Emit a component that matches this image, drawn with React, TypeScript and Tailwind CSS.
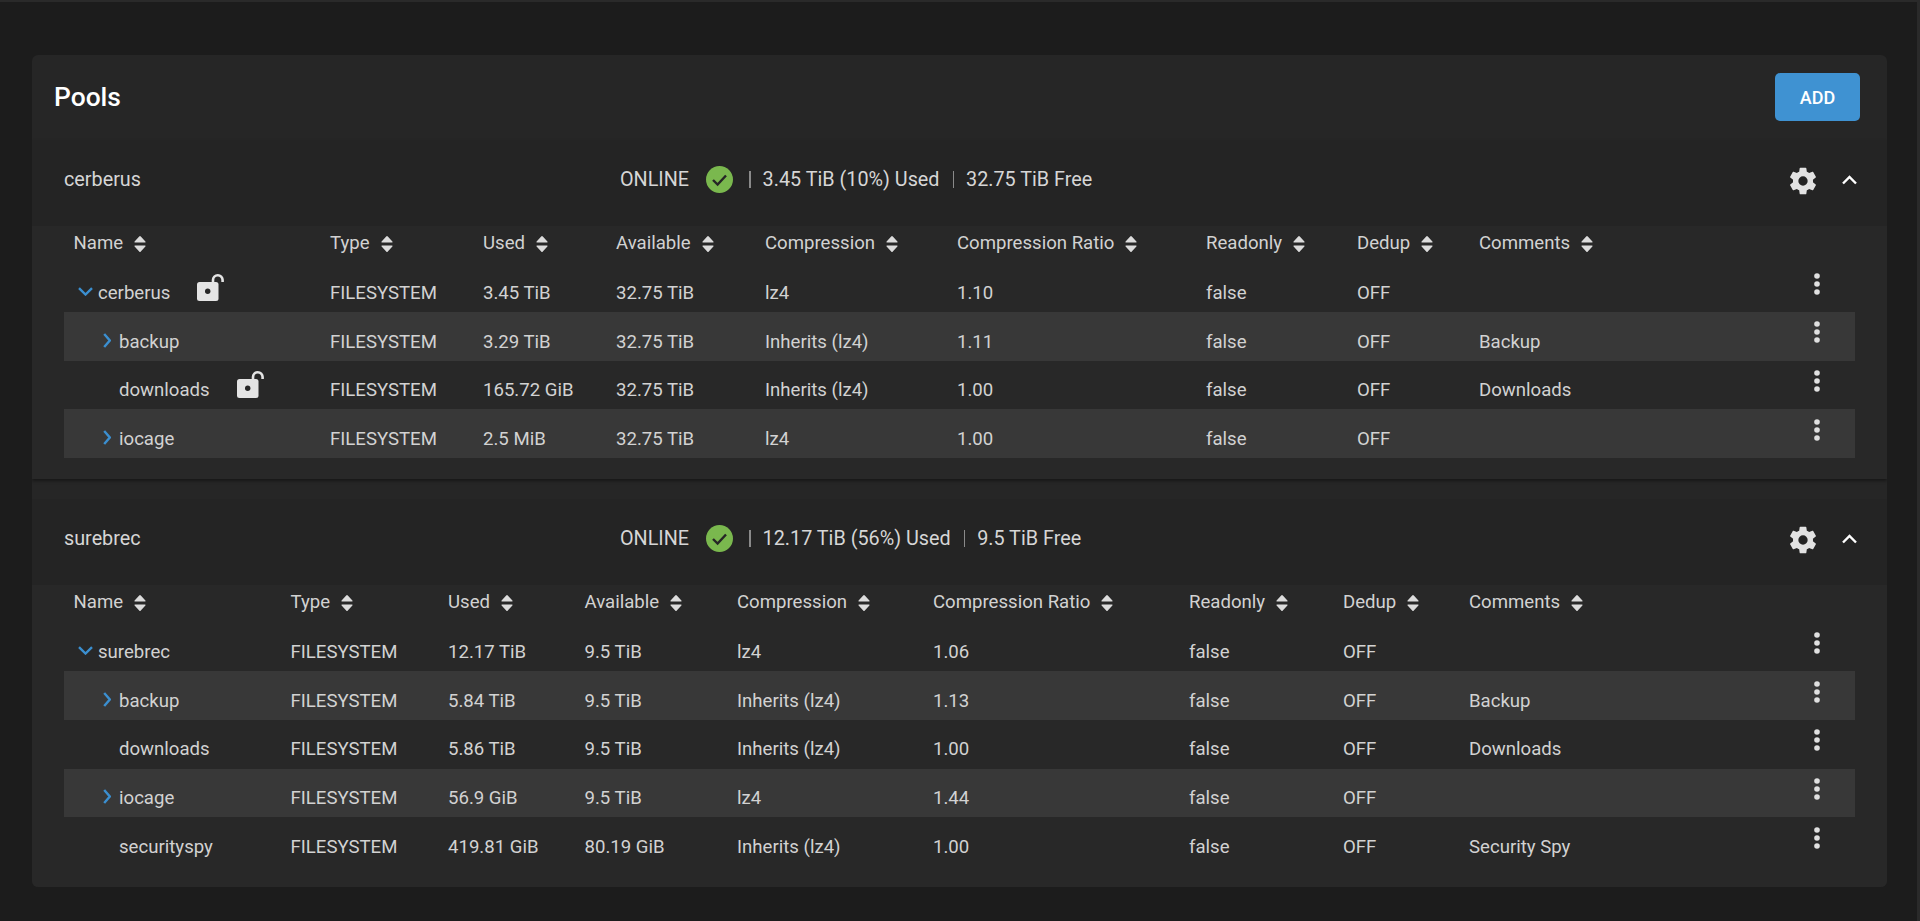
const font = { fontFamily: "Roboto, sans-serif" };

type Row = {
  name: string;
  used: string;
  avail: string;
  compression: string;
  ratio: string;
  comments?: string;
  depth: number;
  chevron?: "down" | "right";
  locked?: boolean;
};

const cerberusRows: Row[] = [
  { name: "cerberus", used: "3.45 TiB", avail: "32.75 TiB", compression: "lz4", ratio: "1.10", depth: 0, chevron: "down", locked: true },
  { name: "backup", used: "3.29 TiB", avail: "32.75 TiB", compression: "Inherits (lz4)", ratio: "1.11", comments: "Backup", depth: 1, chevron: "right" },
  { name: "downloads", used: "165.72 GiB", avail: "32.75 TiB", compression: "Inherits (lz4)", ratio: "1.00", comments: "Downloads", depth: 1, locked: true },
  { name: "iocage", used: "2.5 MiB", avail: "32.75 TiB", compression: "lz4", ratio: "1.00", depth: 1, chevron: "right" },
];

const surebrecRows: Row[] = [
  { name: "surebrec", used: "12.17 TiB", avail: "9.5 TiB", compression: "lz4", ratio: "1.06", depth: 0, chevron: "down" },
  { name: "backup", used: "5.84 TiB", avail: "9.5 TiB", compression: "Inherits (lz4)", ratio: "1.13", comments: "Backup", depth: 1, chevron: "right" },
  { name: "downloads", used: "5.86 TiB", avail: "9.5 TiB", compression: "Inherits (lz4)", ratio: "1.00", comments: "Downloads", depth: 1 },
  { name: "iocage", used: "56.9 GiB", avail: "9.5 TiB", compression: "lz4", ratio: "1.44", depth: 1, chevron: "right" },
  { name: "securityspy", used: "419.81 GiB", avail: "80.19 GiB", compression: "Inherits (lz4)", ratio: "1.00", comments: "Security Spy", depth: 1 },
];

const columns = ["Name", "Type", "Used", "Available", "Compression", "Compression Ratio", "Readonly", "Dedup", "Comments"];

function SortIcon() {
  return (
    <svg width="12" height="16" viewBox="0 0 12 16" fill="#dcdcdc" className="shrink-0">
      <path d="M5.2.6a1 1 0 0 1 1.6 0l4.6 5a.6.6 0 0 1-.4 1H1a.6.6 0 0 1-.4-1z" />
      <path d="M1 9.4h10a.6.6 0 0 1 .4 1l-4.6 5a1 1 0 0 1-1.6 0l-4.6-5a.6.6 0 0 1 .4-1z" />
    </svg>
  );
}

function UnlockIcon() {
  return (
    <svg width="28" height="28" viewBox="0 0 28 28" className="ml-[27px] shrink-0 -translate-y-[7px]">
      <rect x="0" y="9" width="21.5" height="19" rx="2.5" fill="#e4e4e4" />
      <circle cx="10.7" cy="18.3" r="2.7" fill="#282828" />
      <path d="M16 9.5V7a4.8 4.8 0 0 1 9.6 0v2" fill="none" stroke="#e4e4e4" strokeWidth="2.6" />
    </svg>
  );
}

function Chevron({ dir }: { dir: "down" | "right" }) {
  if (dir === "down") {
    return (
      <svg width="15" height="9" viewBox="0 0 15 9" fill="none" stroke="#3b8fd0" strokeWidth="2.4" className="mr-[5px] shrink-0 -translate-y-[2px]">
        <path d="M1 1.2l6.5 6.3L14 1.2" />
      </svg>
    );
  }
  return (
    <svg width="8" height="15" viewBox="0 0 8 15" fill="none" stroke="#3b8fd0" strokeWidth="2.4" className="mr-[8px] shrink-0 -translate-y-[2px]">
      <path d="M1.2 1l5.6 6.5L1.2 14" />
    </svg>
  );
}

function Kebab() {
  return (
    <svg width="8" height="22" viewBox="0 0 8 22" fill="#e0e0e0">
      <circle cx="4" cy="3" r="2.8" />
      <circle cx="4" cy="11" r="2.8" />
      <circle cx="4" cy="19" r="2.8" />
    </svg>
  );
}

function namePadding(r: Row) {
  if (r.depth === 0) return "pl-[4.5px]";
  if (r.chevron) return "pl-[29.5px]";
  return "pl-[45.5px]";
}

function PoolSection({
  name,
  used,
  free,
  rows,
  grid,
  last,
}: {
  name: string;
  used: string;
  free: string;
  rows: Row[];
  grid: string;
  last?: boolean;
}) {
  return (
    <section className={last ? "bg-[#282828]" : "relative bg-[#282828] shadow-[0_2px_3px_rgba(0,0,0,0.4)]"}>
      <div className="flex h-[86px] items-center bg-[#242424] pb-[7px] pl-8 pr-[30px] text-[19.8px] text-[#d6d6d6]">
        <div className="w-[556px]">{name}</div>
        <div className="flex items-center">
          <span>ONLINE</span>
          <svg width="27" height="27" viewBox="0 0 27 27" className="ml-[17px]">
            <circle cx="13.5" cy="13.5" r="13.5" fill="#7ab84e" />
            <path d="M7 14l4.6 4.6L20 9.5" fill="none" stroke="#262626" strokeWidth="2.4" />
          </svg>
          <span className="ml-4 h-[17px] w-[1.5px] bg-[#8a8a8a]" />
          <span className="ml-3">{used}</span>
          <span className="ml-[13px] h-[17px] w-[1.5px] bg-[#8a8a8a]" />
          <span className="ml-3">{free}</span>
        </div>
        <div className="ml-auto flex items-center">
          <svg width="32" height="32" viewBox="0 0 24 24" fill="#e2e2e2" className="mt-[3px]">
            <path d="M12,15.5A3.5,3.5 0 0,1 8.5,12A3.5,3.5 0 0,1 12,8.5A3.5,3.5 0 0,1 15.5,12A3.5,3.5 0 0,1 12,15.5M19.43,12.97C19.47,12.65 19.5,12.33 19.5,12C19.5,11.67 19.47,11.34 19.43,11L21.54,9.37C21.73,9.22 21.78,8.95 21.66,8.73L19.66,5.27C19.54,5.05 19.27,4.96 19.05,5.05L16.56,6.05C16.04,5.66 15.5,5.32 14.87,5.07L14.5,2.42C14.46,2.18 14.25,2 14,2H10C9.75,2 9.54,2.18 9.5,2.42L9.13,5.07C8.5,5.32 7.96,5.66 7.44,6.05L4.95,5.05C4.73,4.96 4.46,5.05 4.34,5.27L2.34,8.73C2.21,8.95 2.27,9.22 2.46,9.37L4.57,11C4.53,11.34 4.5,11.67 4.5,12C4.5,12.33 4.53,12.65 4.57,12.97L2.46,14.63C2.27,14.78 2.21,15.05 2.34,15.27L4.34,18.73C4.46,18.95 4.73,19.03 4.95,18.95L7.44,17.94C7.96,18.34 8.5,18.68 9.13,18.93L9.5,21.58C9.54,21.82 9.75,22 10,22H14C14.25,22 14.46,21.82 14.5,21.58L14.87,18.93C15.5,18.67 16.04,18.34 16.56,17.94L19.05,18.95C19.27,19.03 19.54,18.95 19.66,18.73L21.66,15.27C21.78,15.05 21.73,14.78 21.54,14.63L19.43,12.97Z" />
          </svg>
          <svg width="15" height="10" viewBox="0 0 15 10" fill="none" stroke="#ffffff" strokeWidth="2.4" className="ml-[23px]">
            <path d="M1 8.5l6.5-6.5L14 8.5" />
          </svg>
        </div>
      </div>

      <div className="mx-8 pb-[21px] text-[18.6px] text-[#d2d2d2]">
        <div className={`grid h-[37.5px] items-center pb-[1px] pl-[9.5px] ${grid}`}>
          {columns.map((c) => (
            <div key={c} className="flex items-center gap-[11px]">
              <span>{c}</span>
              <SortIcon />
            </div>
          ))}
        </div>
        {rows.map((r, i) => (
          <div key={r.name} className={`grid h-[48.67px] items-center pl-[9.5px] ${grid} ${i % 2 === 1 ? "bg-[#383838]" : ""}`}>
            <div className={`flex items-center pt-3 ${namePadding(r)}`}>
              {r.chevron && <Chevron dir={r.chevron} />}
              <span>{r.name}</span>
              {r.locked && <UnlockIcon />}
            </div>
            <div className="pt-3">FILESYSTEM</div>
            <div className="pt-3">{r.used}</div>
            <div className="pt-3">{r.avail}</div>
            <div className="pt-3">{r.compression}</div>
            <div className="pt-3">{r.ratio}</div>
            <div className="pt-3">false</div>
            <div className="pt-3">OFF</div>
            <div className="pt-3">{r.comments}</div>
            <div className="flex justify-center pb-[8px]">
              <Kebab />
            </div>
          </div>
        ))}
      </div>
    </section>
  );
}

export default function App() {
  return (
    <div className="h-screen w-full overflow-hidden border-t-2 border-r-[3px] border-[#2a2a2a] bg-[#1c1c1c] pl-8 pr-[30px] pt-[53px]" style={font}>
      <div className="overflow-hidden rounded-[6px] bg-[#262626]">
        <div className="flex h-[85px] items-center justify-between pb-[1px] pl-[22px] pr-[27px]">
          <h1 className="mt-[2px] text-[26.4px] font-medium text-white">Pools</h1>
          <button className="h-12 w-[85px] rounded-[5px] bg-[#3f92d2] text-[18px] font-medium text-white">ADD</button>
        </div>
        <PoolSection
          name="cerberus"
          used="3.45 TiB (10%) Used"
          free="32.75 TiB Free"
          rows={cerberusRows}
          grid="grid-cols-[256.5px_153px_133px_149px_192px_249px_151px_122px_1fr_76px]"
        />
        <div className="h-5" />
        <PoolSection
          name="surebrec"
          used="12.17 TiB (56%) Used"
          free="9.5 TiB Free"
          rows={surebrecRows}
          grid="grid-cols-[217px_157.5px_136.5px_152.5px_196px_256px_154px_126px_1fr_76px]"
          last
        />
      </div>
    </div>
  );
}
